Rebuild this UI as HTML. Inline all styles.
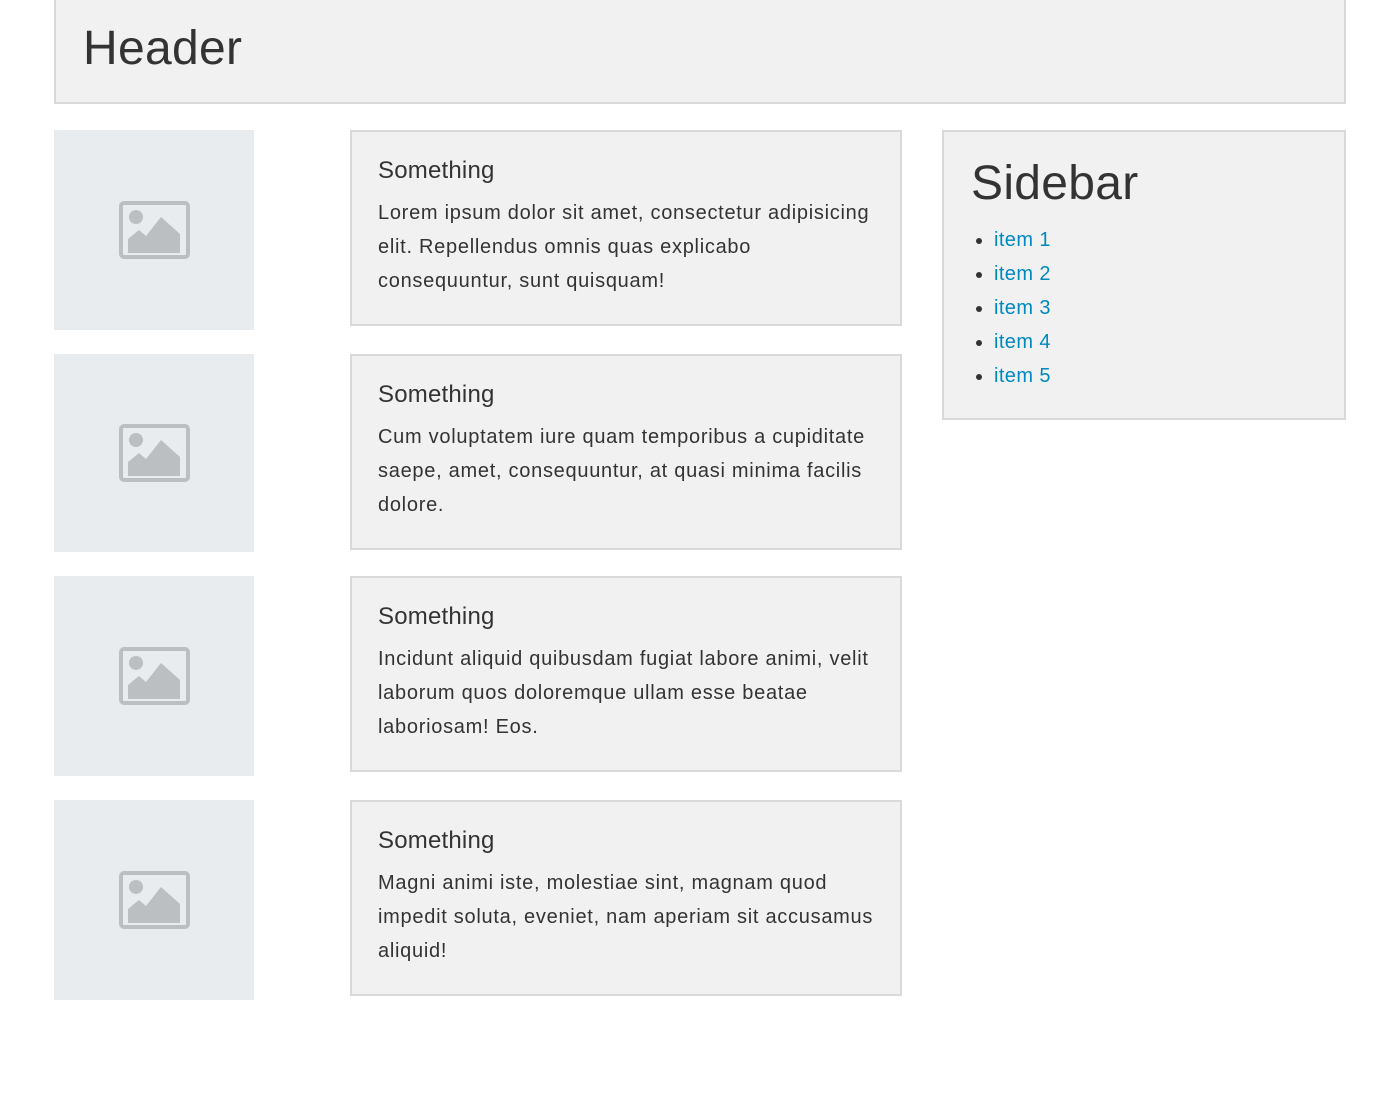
<!DOCTYPE html>
<html><head><meta charset="utf-8"><style>
body{margin:0;background:#fff;font-family:"Liberation Sans",Arial,sans-serif;color:#333;width:1400px;height:1106px;overflow:hidden;position:relative}
.box{position:absolute;background:#f1f1f1;border:2px solid #d9d9d9;box-sizing:border-box}
.img{position:absolute;left:54px;width:200px;background:#e8ecef}
.img svg{position:absolute;left:65px;top:50%;margin-top:-29px}
.card{left:350px;width:552px;height:196px;padding:24px 10px 0 26px}
.card h3{margin:0;font-weight:normal;font-size:24px;line-height:30px;letter-spacing:0.2px}
.card p{margin:10px 0 0;font-size:20px;line-height:34px;white-space:nowrap;letter-spacing:0.72px}
ul{margin:0;padding:0 0 0 22px;font-size:20px;line-height:34px;color:#0089bd;letter-spacing:0.4px}
li::marker{color:#333;font-size:20px}
</style></head><body>
<div class="box" style="left:54px;top:-2px;width:1292px;height:106px"><div style="position:absolute;left:27px;top:22px;font-size:48px;line-height:54px;letter-spacing:0.3px">Header</div></div>

<div class="img" style="top:130px;height:200px"><svg width="72" height="58" viewBox="0 0 72 58"><rect x="2" y="2" width="67" height="54" rx="3" fill="none" stroke="#bcbfc2" stroke-width="4"/><circle cx="17" cy="16" r="7" fill="#bcbfc2"/><polygon points="9,52 9,38 20,29 27,35 42,16 61,33 61,52" fill="#bcbfc2"/></svg></div>
<div class="img" style="top:354px;height:198px"><svg width="72" height="58" viewBox="0 0 72 58"><rect x="2" y="2" width="67" height="54" rx="3" fill="none" stroke="#bcbfc2" stroke-width="4"/><circle cx="17" cy="16" r="7" fill="#bcbfc2"/><polygon points="9,52 9,38 20,29 27,35 42,16 61,33 61,52" fill="#bcbfc2"/></svg></div>
<div class="img" style="top:576px;height:200px"><svg width="72" height="58" viewBox="0 0 72 58"><rect x="2" y="2" width="67" height="54" rx="3" fill="none" stroke="#bcbfc2" stroke-width="4"/><circle cx="17" cy="16" r="7" fill="#bcbfc2"/><polygon points="9,52 9,38 20,29 27,35 42,16 61,33 61,52" fill="#bcbfc2"/></svg></div>
<div class="img" style="top:800px;height:200px"><svg width="72" height="58" viewBox="0 0 72 58"><rect x="2" y="2" width="67" height="54" rx="3" fill="none" stroke="#bcbfc2" stroke-width="4"/><circle cx="17" cy="16" r="7" fill="#bcbfc2"/><polygon points="9,52 9,38 20,29 27,35 42,16 61,33 61,52" fill="#bcbfc2"/></svg></div>

<div class="box card" style="top:130px"><h3>Something</h3><p>Lorem ipsum dolor sit amet, consectetur adipisicing<br>elit. Repellendus omnis quas explicabo<br>consequuntur, sunt quisquam!</p></div>
<div class="box card" style="top:354px"><h3>Something</h3><p>Cum voluptatem iure quam temporibus a cupiditate<br>saepe, amet, consequuntur, at quasi minima facilis<br>dolore.</p></div>
<div class="box card" style="top:576px"><h3>Something</h3><p>Incidunt aliquid quibusdam fugiat labore animi, velit<br>laborum quos doloremque ullam esse beatae<br>laboriosam! Eos.</p></div>
<div class="box card" style="top:800px"><h3>Something</h3><p>Magni animi iste, molestiae sint, magnam quod<br>impedit soluta, eveniet, nam aperiam sit accusamus<br>aliquid!</p></div>

<div class="box" style="left:942px;top:130px;width:404px;height:290px;padding:24px 0 0 27px">
<div style="font-size:48px;line-height:56px;margin-bottom:11px;letter-spacing:0.3px">Sidebar</div>
<ul style="padding-left:23px"><li>item 1</li><li>item 2</li><li>item 3</li><li>item 4</li><li>item 5</li></ul>
</div>
</body></html>
